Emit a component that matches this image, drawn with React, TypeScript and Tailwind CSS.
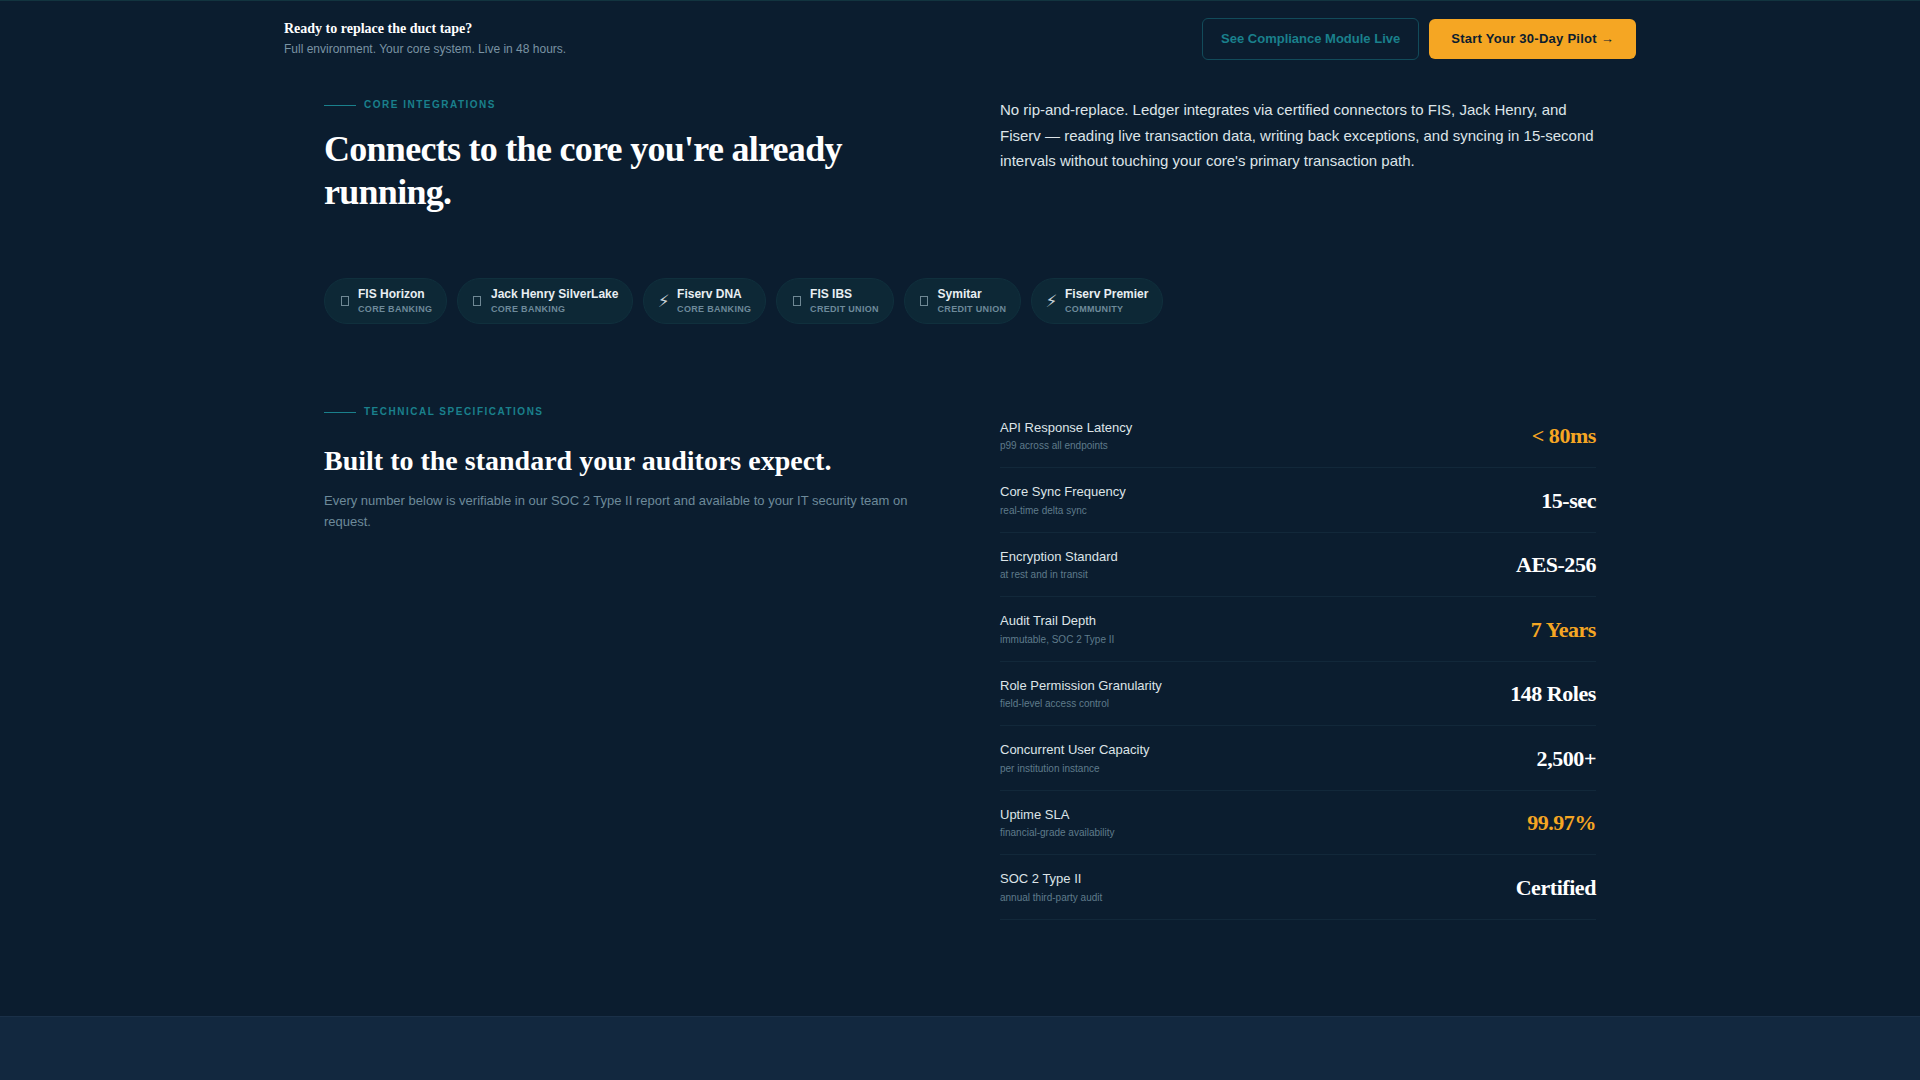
const chips = [
  { icon: "tofu", name: "FIS Horizon", kind: "Core Banking" },
  { icon: "tofu", name: "Jack Henry SilverLake", kind: "Core Banking" },
  { icon: "bolt", name: "Fiserv DNA", kind: "Core Banking" },
  { icon: "tofu", name: "FIS IBS", kind: "Credit Union" },
  { icon: "tofu", name: "Symitar", kind: "Credit Union" },
  { icon: "bolt", name: "Fiserv Premier", kind: "Community" },
];

const specs = [
  { label: "API Response Latency", note: "p99 across all endpoints", value: "< 80ms", amber: true },
  { label: "Core Sync Frequency", note: "real-time delta sync", value: "15-sec" },
  { label: "Encryption Standard", note: "at rest and in transit", value: "AES-256" },
  { label: "Audit Trail Depth", note: "immutable, SOC 2 Type II", value: "7 Years", amber: true },
  { label: "Role Permission Granularity", note: "field-level access control", value: "148 Roles" },
  { label: "Concurrent User Capacity", note: "per institution instance", value: "2,500+" },
  { label: "Uptime SLA", note: "financial-grade availability", value: "99.97%", amber: true },
  { label: "SOC 2 Type II", note: "annual third-party audit", value: "Certified" },
];

function Eyebrow({ children }: { children: string }) {
  return (
    <div className="flex items-center gap-2 text-[10px] leading-[16px] font-bold uppercase tracking-[0.15em] text-[#1a808c]">
      <span className="h-px w-8 bg-[#1a808c]" />
      {children}
    </div>
  );
}

export default function App() {
  return (
    <div className="flex min-h-[1080px] flex-col bg-[#0b1d2f] font-['Liberation_Sans',sans-serif]">
      <header className="border-t border-[#12343f] bg-[#0b1d2f]">
        <div className="mx-auto flex h-[75px] max-w-[1400px] items-center justify-between px-6">
          <div className="pb-px">
            <p className="font-['Liberation_Serif',serif] text-sm leading-[22px] font-bold text-white">
              Ready to replace the duct tape?
            </p>
            <p className="text-xs leading-[18px] text-[#7a93a3]">
              Full environment. Your core system. Live in 48 hours.
            </p>
          </div>
          <div className="flex items-center gap-2.5">
            <a className="rounded-md border border-[#124b5a] px-[18px] py-[11px] text-[13px] leading-[18px] font-bold text-[#1a808c]">
              See Compliance Module Live
            </a>
            <a className="rounded-md bg-[#f5a623] px-[22px] py-[11px] text-[13px] leading-[18px] font-bold tracking-[0.02em] text-[#0b1d2f]">
              Start Your 30-Day Pilot →
            </a>
          </div>
        </div>
      </header>

      <main className="mx-auto w-[1272px] flex-1">
        <section className="grid grid-cols-2 gap-20 pt-[21px]">
          <div>
            <Eyebrow>Core Integrations</Eyebrow>
            <h2 className="mt-[15px] font-['Liberation_Serif',serif] text-[36px] leading-[43px] font-bold tracking-[-0.02em] text-white">
              Connects to the core you're already running.
            </h2>
          </div>
          <p className="text-[15px] leading-[25.5px] text-[#dde4e8]">
            No rip-and-replace. Ledger integrates via certified connectors to FIS, Jack Henry, and Fiserv — reading live
            transaction data, writing back exceptions, and syncing in 15-second intervals without touching your core's
            primary transaction path.
          </p>
        </section>

        <div className="mt-[64px] flex gap-2.5">
          {chips.map((chip) => (
            <div
              key={chip.name}
              className="flex h-[46px] items-center gap-[9px] rounded-full border border-[#10303d] bg-[#0d2836] pr-[13.7px] pl-[15px]"
            >
              <span className="flex w-[9px] justify-center">
                {chip.icon === "bolt" ? (
                  <span className="font-['DejaVu_Sans',sans-serif] text-[17px] leading-5 text-[#c9d4da]">{"\u26A1\uFE0E"}</span>
                ) : (
                  <span className="h-[10px] w-2 border border-[#6f8894]" />
                )}
              </span>
              <div>
                <div className="text-xs leading-[15px] font-bold text-[#e8eef2]">{chip.name}</div>
                <div className="text-[9px] leading-[14px] font-bold tracking-[0.035em] text-[#6d8a9a] uppercase">
                  {chip.kind}
                </div>
              </div>
            </div>
          ))}
        </div>

        <section className="mt-[80px] grid grid-cols-2 gap-20">
          <div>
            <Eyebrow>Technical Specifications</Eyebrow>
            <h3 className="mt-[24px] font-['Liberation_Serif',serif] text-[28px] leading-[34px] font-bold text-white">
              Built to the standard your auditors expect.
            </h3>
            <p className="mt-3 text-[13px] leading-[21px] text-[#6d8a9a]">
              Every number below is verifiable in our SOC 2 Type II report and available to your IT security team on
              request.
            </p>
          </div>
          <div className="-mt-[0.5px]">
            {specs.map((spec) => (
              <div key={spec.label} className="flex h-[64.5px] items-center justify-between border-b border-[#12283a]">
                <div>
                  <div className="text-[13px] leading-[20px] text-[#dde4e8]">{spec.label}</div>
                  <div className="mt-[0.5px] text-[10px] leading-[15px] text-[#5f7b8b]">{spec.note}</div>
                </div>
                <div
                  className={`pt-[2px] font-['Liberation_Serif',serif] text-[22px] leading-[26px] font-bold tracking-[-0.02em] ${
                    spec.amber ? "text-[#f5a623]" : "text-white"
                  }`}
                >
                  {spec.value}
                </div>
              </div>
            ))}
          </div>
        </section>
      </main>

      <footer className="h-[64px] border-t border-[#1a3048] bg-[#12283f]" />
    </div>
  );
}
